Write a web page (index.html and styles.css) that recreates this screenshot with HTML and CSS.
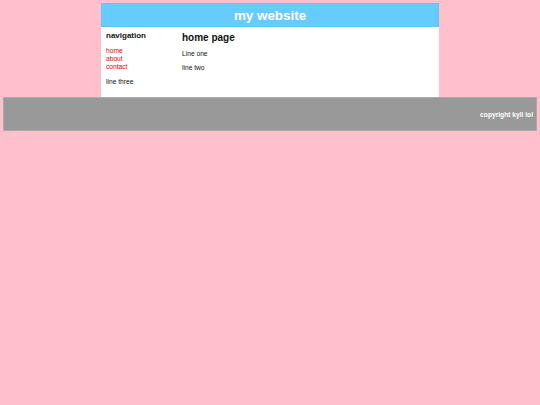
FILE: index.html
```html
<!DOCTYPE html>
<html>
<head>
<meta charset="utf-8">
<title>my website</title>
<link rel="stylesheet" href="styles.css">
</head>
<body>
<div class="wrap">
  <div class="header">my website</div>
  <div class="content">
    <div class="nav">
      <h2 class="nav-title">navigation</h2>
      <div class="links">
        <a href="#">home</a>
        <a href="#">about</a>
        <a href="#">contact</a>
      </div>
      <p class="nav-text">line three</p>
    </div>
    <div class="main">
      <h1 class="main-title">home page</h1>
      <p class="line first">Line one</p>
      <p class="line">line two</p>
    </div>
  </div>
</div>
<div class="footer">copyright kyli lol</div>
</body>
</html>
```
FILE: styles.css
```css
html, body {
  margin: 0;
  padding: 0;
}
body {
  background: #ffc0cb;
  padding: 3px;
  font-family: "Liberation Sans", Arial, sans-serif;
  color: #111;
}
.wrap {
  width: 338px;
  margin: 0 auto;
}
.header {
  height: 24px;
  box-sizing: border-box;
  background: #66ccff;
  border: 1px solid #62c4f4;
  color: #fff;
  font-weight: bold;
  font-size: 13.4px;
  display: flex;
  align-items: center;
  justify-content: center;
}
.content {
  background: #fff;
  display: flex;
  height: 70px;
}
.nav {
  width: 76px;
  padding-left: 5px;
}
.nav-title {
  margin: 4.4px 0 0;
  font-size: 8px;
  line-height: 9.2px;
}
.links {
  margin-top: 6.6px;
  display: flex;
  flex-direction: column;
}
.links a {
  color: #e00;
  text-decoration: none;
  font-size: 6.67px;
  line-height: 7.67px;
}
.nav-text {
  margin: 8px 0 0;
  font-size: 6.67px;
  line-height: 7.67px;
}
.main {
  flex: 1;
}
.main-title {
  margin: 4.5px 0 0;
  font-size: 10px;
  line-height: 11.5px;
}
.line {
  margin: 7px 0 0;
  font-size: 6.67px;
  line-height: 7.67px;
}
.line.first {
  margin-top: 6.8px;
}
.footer {
  height: 34px;
  box-sizing: border-box;
  background: #999;
  border: 1px solid #aaa;
  color: #fff;
  font-weight: bold;
  font-size: 6.67px;
  display: flex;
  align-items: center;
  justify-content: flex-end;
  padding-right: 3px;
}
```
